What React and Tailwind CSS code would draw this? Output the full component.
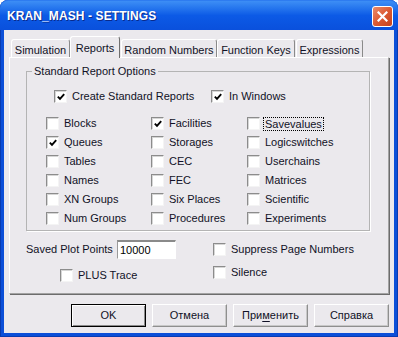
import React from "react";

const Check = ({ checked }) => (
  <span className="w-[13px] h-[13px] shrink-0 bg-white border border-t-[#8c8c8c] border-l-[#8c8c8c] border-b-[#f4f4f4] border-r-[#f4f4f4] shadow-[inset_1px_1px_0_#d6d6d6] flex items-center justify-center">
    {checked && (
      <svg width="8" height="8" viewBox="0 0 8 8">
        <polyline points="0.8,3.6 3,5.8 7.2,1.2" fill="none" stroke="#000" strokeWidth="1.9" />
      </svg>
    )}
  </span>
);

const Option = ({ label, checked, focus }) => (
  <div className="flex items-center gap-[5px] leading-[13px] h-[13px]">
    <Check checked={checked} />
    <span className={focus ? "outline-1 outline-dotted outline-black px-[1px] -ml-[1px] leading-[12px]" : ""}>
      {label}
    </span>
  </div>
);

const Tab = ({ label, width, active }) =>
  active ? (
    <div
      className={`${width} h-[22px] -mb-[1px] z-10 bg-[#ebe9ed] border-t border-l border-white border-r border-r-[#6f6f6f] rounded-t-[3px] flex items-start justify-center pt-[3px]`}
    >
      {label}
    </div>
  ) : (
    <div
      className={`${width} h-[18px] border-t border-l border-white border-r border-r-[#8a8a8a] rounded-t-[3px] flex items-start justify-center pt-[2px]`}
    >
      {label}
    </div>
  );

const Button = ({ children, primary }) => (
  <button
    className={`w-[75px] h-[23px] bg-[#ebe9ed] flex items-center justify-center ${
      primary
        ? "border border-black shadow-[inset_1px_1px_0_#fff,inset_-1px_-1px_0_#8a8a8a]"
        : "border border-t-white border-l-white border-b-[#8f8f8f] border-r-[#8f8f8f] shadow-[inset_-1px_-1px_0_#c8c8c8]"
    }`}
  >
    {children}
  </button>
);

const grid = [
  ["Blocks", false], ["Facilities", true], ["Savevalues", false, true],
  ["Queues", true], ["Storages", false], ["Logicswitches", false],
  ["Tables", false], ["CEC", false], ["Userchains", false],
  ["Names", false], ["FEC", false], ["Matrices", false],
  ["XN Groups", false], ["Six Places", false], ["Scientific", false],
  ["Num Groups", false], ["Procedures", false], ["Experiments", false],
];

export default function App() {
  return (
    <div className="w-[398px] h-[337px] bg-white font-['Liberation_Sans',Arial,sans-serif] text-[11px] text-[#111126]">
      <div className="w-full h-full flex flex-col rounded-t-[8px] bg-[#0b4fd8] px-[4px] pb-[4px] shadow-[inset_1px_0_0_#083bb0,inset_-1px_0_0_#083bb0,inset_0_-1px_0_#083bb0]">
        {/* Title bar */}
        <div className="-mx-[4px] h-[30px] shrink-0 rounded-t-[8px] bg-gradient-to-b from-[#3d8ef5] via-[#0c5ae6] to-[#0a50dc] flex items-center justify-between pl-[7px] pr-[5px] border-t border-[#2e7cf0]">
          <span className="text-white font-bold text-[12px] tracking-[0.1px] [text-shadow:1px_1px_0_#0a2a8a]">
            KRAN_MASH - SETTINGS
          </span>
          <div className="w-[21px] h-[21px] mt-[1px] rounded-[3px] border border-white bg-gradient-to-br from-[#e98a6a] via-[#dc5a32] to-[#c6421d] flex items-center justify-center">
            <svg width="11" height="11" viewBox="0 0 11 11">
              <path d="M1.5 1.5 L9.5 9.5 M9.5 1.5 L1.5 9.5" stroke="#fff" strokeWidth="2.2" strokeLinecap="square" />
            </svg>
          </div>
        </div>

        {/* Body */}
        <div className="flex-1 bg-[#ebe9ed] px-[5px] pt-[6px] flex flex-col">
          <div className="flex items-end h-[21px] pl-[2px]">
            <Tab label="Simulation" width="w-[59px]" />
            <Tab label="Reports" width="w-[50px]" active />
            <div className="w-[1px]" />
            <Tab label="Random Numbers" width="w-[96px]" />
            <Tab label="Function Keys" width="w-[78px]" />
            <div className="w-[1px]" />
            <Tab label="Expressions" width="w-[67px]" />
          </div>

          {/* Panel */}
          <div className="h-[237px] border-t border-l border-white border-r border-b border-r-[#a3a3a3] border-b-[#a3a3a3] shadow-[1px_1px_0_#6c6c6c]">
            <fieldset className="ml-[16px] mt-[7px] w-[344px] border border-[#b4b4b4] shadow-[1px_1px_0_#fff] pb-[2px]">
              <legend className="ml-[5px] px-[2px] leading-[13px]">Standard Report Options</legend>
              <div className="flex pl-[27px] pt-[12px] h-[25px]">
                <div className="w-[157px] flex">
                  <Option label="Create Standard Reports" checked />
                </div>
                <Option label="In Windows" checked />
              </div>
              <div className="mt-[11px] pl-[19px] grid grid-cols-[105px_96px_1fr] auto-rows-[19px] items-center">
                {grid.map(([label, checked, focus]) => (
                  <Option key={label} label={label} checked={checked} focus={focus} />
                ))}
              </div>
            </fieldset>

            <div className="flex mt-[9px] pl-[16px]">
              <div className="w-[187px] flex flex-col">
                <div className="flex items-center h-[19px]">
                  <span className="w-[91px]">Saved Plot Points</span>
                  <div className="w-[59px] h-[19px] bg-white border-t-2 border-l border-t-[#8a8a8a] border-l-[#9a9a9a] border-b border-r border-b-white border-r-white flex items-center pl-[2px] text-black">
                    10000
                  </div>
                </div>
                <div className="mt-[10px] pl-[34px]">
                  <Option label="PLUS Trace" />
                </div>
              </div>
              <div className="flex flex-col pt-[3px] gap-[10px]">
                <Option label="Suppress Page Numbers" />
                <Option label="Silence" />
              </div>
            </div>
          </div>

          {/* Buttons */}
          <div className="flex justify-end gap-[6px] mt-[10px]">
            <Button primary>OK</Button>
            <Button>Отмена</Button>
            <Button>
              <span>
                При<span className="underline underline-offset-2">м</span>енить
              </span>
            </Button>
            <Button>Справка</Button>
          </div>
        </div>
      </div>
    </div>
  );
}
